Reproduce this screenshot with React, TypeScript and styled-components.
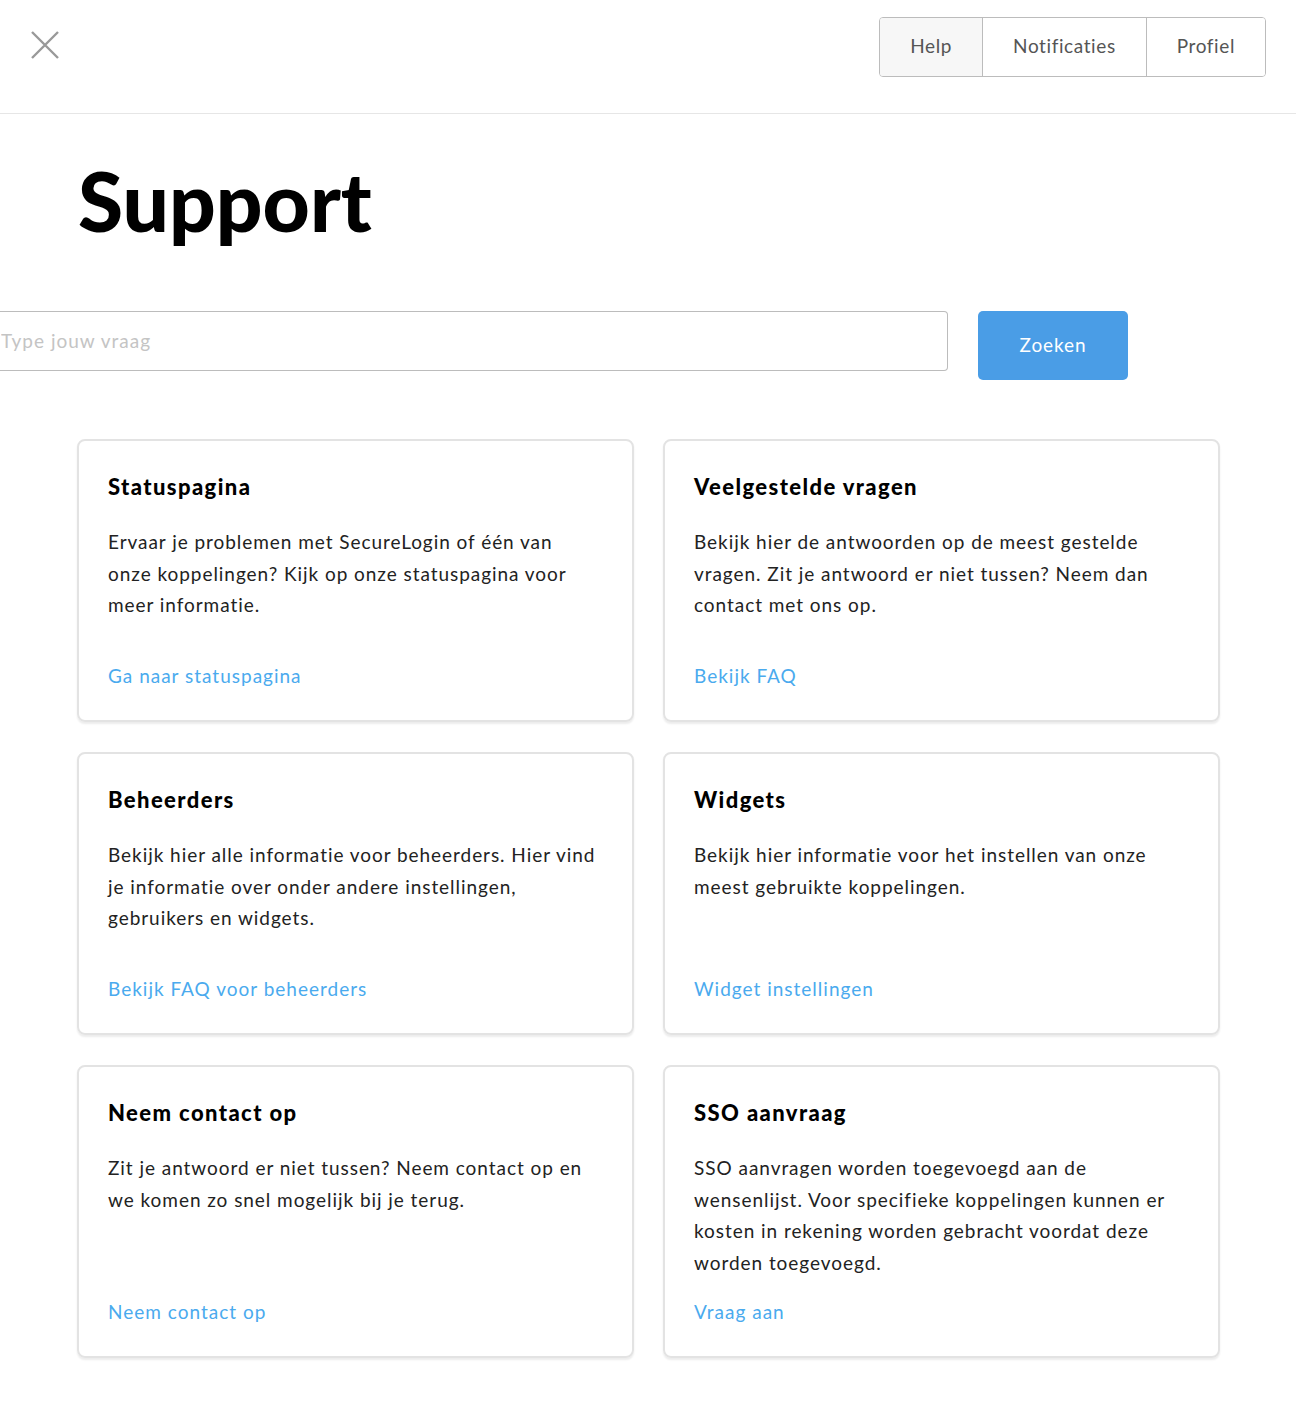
import React from "react";
import styled, { createGlobalStyle } from "styled-components";

const GlobalStyle = createGlobalStyle`
  html, body {
    margin: 0;
    padding: 0;
    background: #fff;
    font-family: "Lato", "Open Sans", sans-serif;
    font-variant-ligatures: none;
    color: #222;
  }
  * {
    box-sizing: border-box;
  }
`;

type CardData = {
  title: string;
  body: string;
  link: string;
};

const cards: CardData[] = [
  {
    title: "Statuspagina",
    body: "Ervaar je problemen met SecureLogin of één van onze koppelingen? Kijk op onze statuspagina voor meer informatie.",
    link: "Ga naar statuspagina",
  },
  {
    title: "Veelgestelde vragen",
    body: "Bekijk hier de antwoorden op de meest gestelde vragen. Zit je antwoord er niet tussen? Neem dan contact met ons op.",
    link: "Bekijk FAQ",
  },
  {
    title: "Beheerders",
    body: "Bekijk hier alle informatie voor beheerders. Hier vind je informatie over onder andere instellingen, gebruikers en widgets.",
    link: "Bekijk FAQ voor beheerders",
  },
  {
    title: "Widgets",
    body: "Bekijk hier informatie voor het instellen van onze meest gebruikte koppelingen.",
    link: "Widget instellingen",
  },
  {
    title: "Neem contact op",
    body: "Zit je antwoord er niet tussen? Neem contact op en we komen zo snel mogelijk bij je terug.",
    link: "Neem contact op",
  },
  {
    title: "SSO aanvraag",
    body: "SSO aanvragen worden toegevoegd aan de wensenlijst. Voor specifieke koppelingen kunnen er kosten in rekening worden gebracht voordat deze worden toegevoegd.",
    link: "Vraag aan",
  },
];

const navItems = ["Help", "Notificaties", "Profiel"];

const App = () => (
  <>
    <GlobalStyle />
    <Header>
      <CloseButton aria-label="Sluiten">
        <svg width="30" height="30" viewBox="0 0 30 30">
          <path d="M2 2 L28 28 M28 2 L2 28" stroke="#999" strokeWidth="2.4" fill="none" />
        </svg>
      </CloseButton>
      <NavGroup>
        {navItems.map((item, i) => (
          <NavButton key={item} $active={i === 0}>
            {item}
          </NavButton>
        ))}
      </NavGroup>
    </Header>
    <Main>
      <Title>Support</Title>
      <SearchRow>
        <SearchInput placeholder="Type jouw vraag" />
        <SearchButton>Zoeken</SearchButton>
      </SearchRow>
      <CardGrid>
        {cards.map((card) => (
          <Card key={card.title}>
            <CardTitle>{card.title}</CardTitle>
            <CardBody>{card.body}</CardBody>
            <CardLink href="#">{card.link}</CardLink>
          </Card>
        ))}
      </CardGrid>
    </Main>
  </>
);

const Header = styled.header`
  height: 114px;
  border-bottom: 1px solid #e6e6e6;
  display: flex;
  align-items: flex-start;
  justify-content: space-between;
  padding: 17px 30px 0 30px;
`;

const CloseButton = styled.button`
  background: none;
  border: 0;
  padding: 0;
  margin-top: 13px;
  width: 30px;
  height: 30px;
  cursor: pointer;
  svg {
    display: block;
  }
`;

const NavGroup = styled.nav`
  display: flex;
  height: 60px;
  border: 1px solid #bcbcbc;
  border-radius: 4px;
  overflow: hidden;
`;

const NavButton = styled.button<{ $active?: boolean }>`
  font-family: inherit;
  font-size: 19px;
  letter-spacing: 0.6px;
  color: #555;
  background: ${(p) => (p.$active ? "#f7f7f7" : "#fff")};
  border: 0;
  border-left: 1px solid #bcbcbc;
  padding: 0 30px 3px 30px;
  cursor: pointer;
  &:first-child {
    border-left: 0;
  }
`;

const Main = styled.main`
  padding: 0 0 54px 0;
`;

const Title = styled.h1`
  font-size: 82px;
  font-weight: 900;
  color: #000;
  margin: 0;
  padding: 38px 0 0 78px;
  line-height: 96px;
  letter-spacing: 0px;
`;

const SearchRow = styled.div`
  display: flex;
  align-items: flex-start;
  gap: 30px;
  margin-top: 63px;
`;

const SearchInput = styled.input`
  width: 948px;
  height: 60px;
  border: 1px solid #bcbcbc;
  border-left: 0;
  border-radius: 0 4px 4px 0;
  padding: 0 0 2px 1px;
  font-family: inherit;
  font-size: 19px;
  letter-spacing: 1px;
  color: #333;
  outline: none;
  &::placeholder {
    color: #c4c4c4;
  }
`;

const SearchButton = styled.button`
  width: 150px;
  height: 69px;
  background: #4a9de6;
  color: #fff;
  border: 0;
  border-radius: 5px;
  font-family: inherit;
  font-size: 19px;
  letter-spacing: 0.9px;
  padding-bottom: 3px;
  cursor: pointer;
`;

const CardGrid = styled.div`
  display: grid;
  grid-template-columns: 557px 557px;
  column-gap: 29px;
  row-gap: 30px;
  margin: 59px 0 0 77px;
`;

const Card = styled.section`
  display: flex;
  flex-direction: column;
  min-height: 283px;
  border: 2px solid #e3e3e3;
  border-radius: 8px;
  box-shadow: 0 2px 2px rgba(0, 0, 0, 0.08);
  padding: 32px 32px 32px 29px;
`;

const CardTitle = styled.h3`
  margin: 0;
  font-size: 22px;
  line-height: 28px;
  font-weight: 900;
  letter-spacing: 1.4px;
  color: #000;
`;

const CardBody = styled.p`
  margin: 25px 0 0 0;
  font-size: 19px;
  line-height: 31.5px;
  letter-spacing: 0.95px;
  color: #222;
`;

const CardLink = styled.a`
  margin-top: auto;
  padding-top: 22px;
  font-size: 19px;
  line-height: 24px;
  letter-spacing: 1px;
  color: #4aaaee;
  text-decoration: none;
`;

export default App;
